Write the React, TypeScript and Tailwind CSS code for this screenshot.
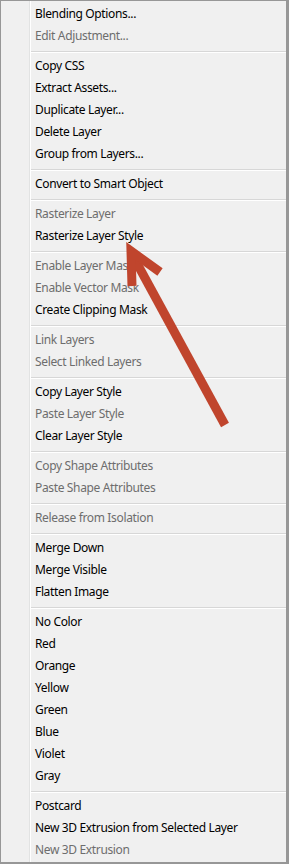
type Item = { label: string; disabled?: boolean };

const sections: Item[][] = [
  [{ label: "Blending Options..." }, { label: "Edit Adjustment...", disabled: true }],
  [
    { label: "Copy CSS" },
    { label: "Extract Assets..." },
    { label: "Duplicate Layer..." },
    { label: "Delete Layer" },
    { label: "Group from Layers..." },
  ],
  [{ label: "Convert to Smart Object" }],
  [{ label: "Rasterize Layer", disabled: true }, { label: "Rasterize Layer Style" }],
  [
    { label: "Enable Layer Mask", disabled: true },
    { label: "Enable Vector Mask", disabled: true },
    { label: "Create Clipping Mask" },
  ],
  [
    { label: "Link Layers", disabled: true },
    { label: "Select Linked Layers", disabled: true },
  ],
  [
    { label: "Copy Layer Style" },
    { label: "Paste Layer Style", disabled: true },
    { label: "Clear Layer Style" },
  ],
  [
    { label: "Copy Shape Attributes", disabled: true },
    { label: "Paste Shape Attributes", disabled: true },
  ],
  [{ label: "Release from Isolation", disabled: true }],
  [{ label: "Merge Down" }, { label: "Merge Visible" }, { label: "Flatten Image" }],
  [
    { label: "No Color" },
    { label: "Red" },
    { label: "Orange" },
    { label: "Yellow" },
    { label: "Green" },
    { label: "Blue" },
    { label: "Violet" },
    { label: "Gray" },
  ],
  [
    { label: "Postcard" },
    { label: "New 3D Extrusion from Selected Layer" },
    { label: "New 3D Extrusion", disabled: true },
  ],
];

function Separator() {
  return (
    <div className="flex h-[8px] flex-col pt-[4px]">
      <div className="h-px bg-[#d7d7d7]" />
      <div className="h-px bg-white" />
    </div>
  );
}

function MenuRow({ item }: { item: Item }) {
  return (
    <div
      className={
        item.disabled
          ? "flex h-[22px] items-center pl-[4px] text-[#6d6d6d]"
          : "flex h-[22px] items-center pl-[4px] text-black"
      }
    >
      {item.label}
    </div>
  );
}

function Arrow() {
  return (
    <svg
      className="pointer-events-none absolute left-0 top-0"
      width="289"
      height="864"
      viewBox="0 0 289 864"
    >
      <g stroke="#c0452d" strokeWidth="9" fill="none" strokeLinecap="butt" strokeLinejoin="miter">
        <line x1="225" y1="425" x2="133" y2="256" />
        <polyline points="132,286 131,251 160,272" />
      </g>
    </svg>
  );
}

export default function App() {
  return (
    <div
      className="relative h-[864px] w-[289px] bg-[#979797] text-[12px] tracking-[-0.35px]"
      style={{ fontFamily: '"Noto Sans", "Open Sans", sans-serif' }}
    >
      <div className="absolute bottom-[2px] left-[1px] right-[3px] top-[1px] flex bg-[#f0f0f0]">
        <div className="w-[28px] shrink-0" />
        <div className="w-px shrink-0 bg-[#e2e3e3]" />
        <div className="w-px shrink-0 bg-white" />
        <div className="flex flex-1 flex-col pt-[2px]">
          {sections.map((section, i) => (
            <div key={i}>
              {i > 0 ? <Separator /> : null}
              {section.map((item) => (
                <MenuRow key={item.label} item={item} />
              ))}
            </div>
          ))}
        </div>
      </div>
      <Arrow />
    </div>
  );
}
